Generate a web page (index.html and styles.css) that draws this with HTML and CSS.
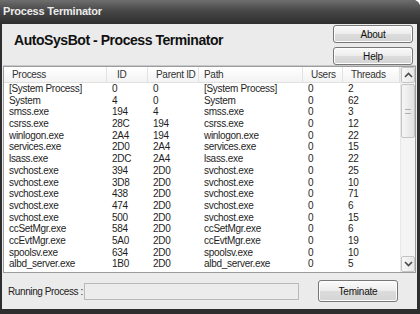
FILE: index.html
```html
<!DOCTYPE html>
<html>
<head>
<meta charset="utf-8">
<link rel="stylesheet" href="styles.css">
</head>
<body>
<div class="window">
  <div class="titlebar">Process Terminator</div>
  <div class="client">
    <div class="top">
      <h1 class="heading">AutoSysBot - Process Terminator</h1>
      <div class="side-btns">
        <button class="btn btn-small">About</button>
        <button class="btn btn-small">Help</button>
      </div>
    </div>
    <div class="listbox">
      <div class="table">
        <div class="row head">
          <span>Process</span><span>ID</span><span>Parent ID</span><span>Path</span><span>Users</span><span>Threads</span>
        </div>
        <div class="row"><span>[System Process]</span><span>0</span><span>0</span><span>[System Process]</span><span>0</span><span>2</span></div>
        <div class="row"><span>System</span><span>4</span><span>0</span><span>System</span><span>0</span><span>62</span></div>
        <div class="row"><span>smss.exe</span><span>194</span><span>4</span><span>smss.exe</span><span>0</span><span>3</span></div>
        <div class="row"><span>csrss.exe</span><span>28C</span><span>194</span><span>csrss.exe</span><span>0</span><span>12</span></div>
        <div class="row"><span>winlogon.exe</span><span>2A4</span><span>194</span><span>winlogon.exe</span><span>0</span><span>22</span></div>
        <div class="row"><span>services.exe</span><span>2D0</span><span>2A4</span><span>services.exe</span><span>0</span><span>15</span></div>
        <div class="row"><span>lsass.exe</span><span>2DC</span><span>2A4</span><span>lsass.exe</span><span>0</span><span>22</span></div>
        <div class="row"><span>svchost.exe</span><span>394</span><span>2D0</span><span>svchost.exe</span><span>0</span><span>25</span></div>
        <div class="row"><span>svchost.exe</span><span>3D8</span><span>2D0</span><span>svchost.exe</span><span>0</span><span>10</span></div>
        <div class="row"><span>svchost.exe</span><span>438</span><span>2D0</span><span>svchost.exe</span><span>0</span><span>71</span></div>
        <div class="row"><span>svchost.exe</span><span>474</span><span>2D0</span><span>svchost.exe</span><span>0</span><span>6</span></div>
        <div class="row"><span>svchost.exe</span><span>500</span><span>2D0</span><span>svchost.exe</span><span>0</span><span>15</span></div>
        <div class="row"><span>ccSetMgr.exe</span><span>584</span><span>2D0</span><span>ccSetMgr.exe</span><span>0</span><span>6</span></div>
        <div class="row"><span>ccEvtMgr.exe</span><span>5A0</span><span>2D0</span><span>ccEvtMgr.exe</span><span>0</span><span>19</span></div>
        <div class="row"><span>spoolsv.exe</span><span>634</span><span>2D0</span><span>spoolsv.exe</span><span>0</span><span>10</span></div>
        <div class="row"><span>albd_server.exe</span><span>1B0</span><span>2D0</span><span>albd_server.exe</span><span>0</span><span>5</span></div>
      </div>
      <div class="scrollbar">
        <div class="sb-btn">
          <svg width="9" height="6" viewBox="0 0 9 6"><path d="M1 5 L4.5 1.5 L8 5" fill="none" stroke="#4a4a4a" stroke-width="1.6"/></svg>
        </div>
        <div class="sb-track">
          <div class="sb-thumb"><span class="grip"></span></div>
        </div>
        <div class="sb-btn">
          <svg width="9" height="6" viewBox="0 0 9 6"><path d="M1 1 L4.5 4.5 L8 1" fill="none" stroke="#4a4a4a" stroke-width="1.6"/></svg>
        </div>
      </div>
    </div>
    <div class="bottom">
      <span class="label">Running Process :</span>
      <div class="field"></div>
      <button class="btn btn-big">Teminate</button>
    </div>
  </div>
</div>
</body>
</html>
```

FILE: styles.css
```css
* { box-sizing: border-box; }
html, body { margin: 0; padding: 0; }
body {
  width: 420px;
  height: 314px;
  overflow: hidden;
  background: #fff;
  font-family: "Liberation Sans", Arial, sans-serif;
}
.window {
  width: 420px;
  height: 314px;
  background: #2e2e2e;
  border-top-right-radius: 7px;
  display: flex;
  flex-direction: column;
  padding: 0 3px 5px 2px;
}
.titlebar {
  height: 24px;
  flex: none;
  margin: 0 -3px 0 -2px;
  padding: 0 0 0 3px;
  background: linear-gradient(#6e6e6e, #474747 45%, #2e2e2e);
  border-top-right-radius: 7px;
  color: #ececec;
  font-weight: bold;
  font-size: 11px;
  letter-spacing: -0.2px;
  line-height: 23px;
}
.client {
  flex: 1;
  background: #ebebeb;
  display: flex;
  flex-direction: column;
  padding: 0 1px 0 1px;
}
.top {
  height: 42px;
  display: flex;
  justify-content: space-between;
  border-bottom: 1px solid #c8c8c8;
  padding: 1px 3px 0 11px;
}
.heading {
  margin: 0;
  font-size: 14px;
  letter-spacing: -0.45px;
  font-weight: bold;
  color: #111;
  line-height: 30px;
}
.side-btns {
  display: flex;
  flex-direction: column;
  gap: 4px;
}
.btn {
  font-family: "Liberation Sans", Arial, sans-serif;
  color: #111;
  background: linear-gradient(#fafafa, #ececec 50%, #dcdcdc 51%, #d4d4d4);
  border: 1px solid #777;
  border-radius: 3px;
  box-shadow: inset 0 0 0 1px #fdfdfd;
  padding: 0;
  margin: 0;
}
.btn-small {
  width: 80px;
  height: 18px;
  font-size: 10px;
  letter-spacing: -0.2px;
}
.listbox {
  height: 207px;
  background: #fff;
  border: 1px solid #9c9c9c;
  display: flex;
  overflow: hidden;
}
.table {
  flex: 1;
  font-size: 10px;
  letter-spacing: -0.3px;
  color: #1e1e1e;
}
.row {
  display: grid;
  grid-template-columns: 103px 41px 51px 104px 40px 57px;
  height: 11.7px;
  line-height: 11.7px;
  white-space: nowrap;
}
.row span { padding-left: 5px; overflow: hidden; }
.row.head {
  height: 16px;
  line-height: 16px;
  background: linear-gradient(#ffffff, #f3f3f3);
  border-bottom: 1px solid #e0e0e0;
  color: #333;
}
.row.head span { padding-left: 8px; border-right: 1px solid #e2e2e2; }
.row.head span:nth-child(2) { padding-left: 10px; }
.row.head span:nth-child(4) { padding-left: 5px; }
.scrollbar {
  width: 15px;
  flex: none;
  display: flex;
  flex-direction: column;
  background: #f4f4f4;
  border-left: 1px solid #e8e8e8;
}
.sb-btn {
  height: 16px;
  display: flex;
  align-items: center;
  justify-content: center;
  background: linear-gradient(90deg, #f8f8f8, #e6e6e6);
  border: 1px solid #c4c4c4;
  border-radius: 2px;
}
.sb-track {
  flex: 1;
  padding: 1px 0;
}
.sb-thumb {
  height: 54px;
  background: linear-gradient(90deg, #f6f6f6, #e2e2e2);
  border: 1px solid #c4c4c4;
  border-radius: 2px;
  display: flex;
  align-items: center;
  justify-content: center;
}
.grip {
  width: 6px;
  height: 5px;
  border-top: 1px solid #b0b0b0;
  border-bottom: 1px solid #b0b0b0;
}
.bottom {
  flex: 1;
  display: flex;
  align-items: center;
  padding: 0 0 0 5px;
}
.label {
  font-size: 10px;
  letter-spacing: -0.4px;
  color: #222;
  width: 76px;
  flex: none;
  white-space: nowrap;
}
.field {
  width: 215px;
  height: 17px;
  flex: none;
  border: 1px solid #b9b9b9;
  background: #ececec;
}
.btn-big {
  width: 80px;
  height: 22px;
  flex: none;
  font-size: 10px;
  letter-spacing: -0.2px;
  margin-left: 19px;
}
```
